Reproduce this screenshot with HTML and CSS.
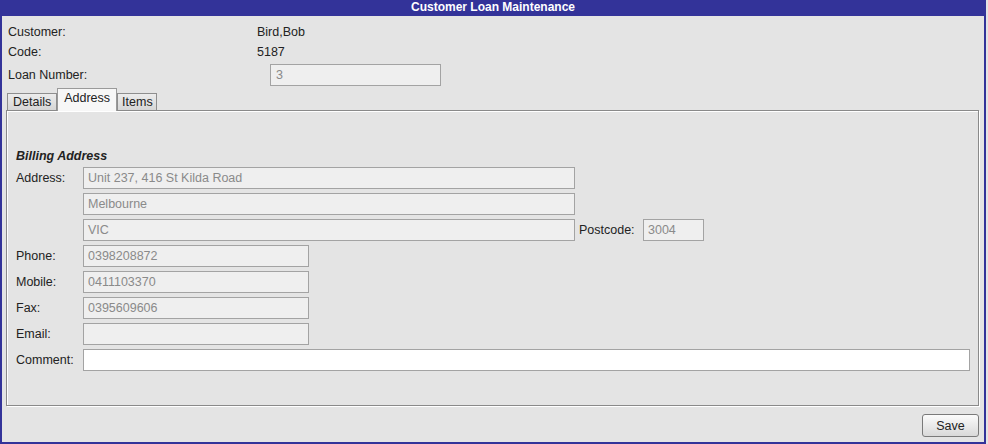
FILE: index.html
```html
<!DOCTYPE html>
<html>
<head>
<meta charset="utf-8">
<link rel="stylesheet" href="styles.css">
</head>
<body>
<div class="window">
  <div class="titlebar">Customer Loan Maintenance</div>
  <div class="body">
    <div class="header">
      <div class="hrow"><span class="hlabel">Customer:</span><span class="hval">Bird,Bob</span></div>
      <div class="hrow"><span class="hlabel">Code:</span><span class="hval">5187</span></div>
      <div class="hrow hrow-input"><span class="hlabel">Loan Number:</span><span class="field loan">3</span></div>
    </div>
    <div class="tabs">
      <div class="tab">Details</div>
      <div class="tab active">Address</div>
      <div class="tab tab-last">Items</div>
    </div>
    <div class="panel">
      <div class="section-title">Billing Address</div>
      <div class="frow"><span class="flabel">Address:</span><span class="field wide">Unit 237, 416 St Kilda Road</span></div>
      <div class="frow"><span class="flabel"></span><span class="field wide">Melbourne</span></div>
      <div class="frow"><span class="flabel"></span><span class="field wide">VIC</span><span class="plabel">Postcode:</span><span class="field post">3004</span></div>
      <div class="frow"><span class="flabel">Phone:</span><span class="field mid">0398208872</span></div>
      <div class="frow"><span class="flabel">Mobile:</span><span class="field mid">0411103370</span></div>
      <div class="frow"><span class="flabel">Fax:</span><span class="field mid">0395609606</span></div>
      <div class="frow"><span class="flabel">Email:</span><span class="field mid"></span></div>
      <div class="frow"><span class="flabel">Comment:</span><span class="field full editable"></span></div>
    </div>
    <div class="footer">
      <button class="btn">Save</button>
    </div>
  </div>
</div>
</body>
</html>
```

FILE: styles.css
```css
html, body {
  margin: 0;
  padding: 0;
  background: #e4e4e4;
}
body {
  font-family: "Liberation Sans", Arial, sans-serif;
  font-size: 12.5px;
  color: #222;
}
.window {
  width: 982px;
  height: 442px;
  border: 2px solid #333399;
  border-top: none;
  background: #e4e4e4;
  display: flex;
  flex-direction: column;
}
.titlebar {
  height: 16px;
  line-height: 15px;
  background: #333399;
  color: #fff;
  font-size: 12px;
  font-weight: bold;
  text-align: center;
  margin: 0 -2px;
}
.body {
  flex: 1;
  display: flex;
  flex-direction: column;
  padding: 6px 0 0 4px;
}
.header {
  display: flex;
  flex-direction: column;
  padding-left: 2px;
}
.hrow {
  display: flex;
  align-items: center;
  height: 20px;
}
.hrow-input {
  height: 22px;
  margin-top: 2px;
}
.hlabel {
  width: 249px;
}
.hval {
  padding-left: 0;
}
.hrow-input .field {
  margin-left: 13px;
}
.field {
  box-sizing: border-box;
  height: 22px;
  line-height: 20px;
  border: 1px solid #a3a3a3;
  background: #efefef;
  color: #8a8a8a;
  padding-left: 4px;
  white-space: nowrap;
  overflow: hidden;
}
.loan { width: 171px; padding-left: 5px; }
.tabs {
  display: flex;
  align-items: flex-end;
  margin-top: 2px;
  margin-left: 1px;
  height: 22px;
  position: relative;
  z-index: 1;
}
.tab {
  box-sizing: border-box;
  height: 17px;
  line-height: 16px;
  padding: 0 5px 0 5px;
  border: 1px solid #8e8e8e;
  border-bottom: none;
  background: linear-gradient(#ececec, #d6d6d6);
}
.tab-last {
  padding: 0 3px 0 4px;
}
.tab.active {
  height: 23px;
  line-height: 19px;
  background: #f7f7f7;
  padding: 0 6px 0 6px;
  margin-bottom: -1px;
  border-color: #9a9a9a;
}
.panel {
  box-sizing: border-box;
  width: 973px;
  height: 296px;
  border: 1px solid #8a8a8a;
  box-shadow: inset 1px 1px 0 #fff, 1px 1px 0 #fff;
  background: #e4e4e4;
  padding: 36px 0 0 9px;
  display: flex;
  flex-direction: column;
  margin-left: 0;
}
.section-title {
  font-weight: bold;
  font-style: italic;
  height: 18px;
  line-height: 18px;
  margin-bottom: 2px;
}
.frow {
  display: flex;
  align-items: center;
  height: 22px;
  margin-bottom: 4px;
}
.flabel {
  width: 67px;
  flex: none;
}
.wide { width: 492px; }
.mid { width: 226px; }
.full { width: 887px; }
.post { width: 61px; }
.plabel {
  margin-left: 4px;
  width: 64px;
}
.editable {
  background: #fff;
}
.footer {
  display: flex;
  justify-content: flex-end;
  padding: 8px 5px 0 0;
}
.btn {
  box-sizing: border-box;
  width: 57px;
  height: 23px;
  font-family: "Liberation Sans", Arial, sans-serif;
  font-size: 12.5px;
  color: #222;
  border: 1px solid #7a7a7a;
  border-radius: 3px;
  background: linear-gradient(#fbfbfb, #d9d9d9);
  padding: 0;
}
```
